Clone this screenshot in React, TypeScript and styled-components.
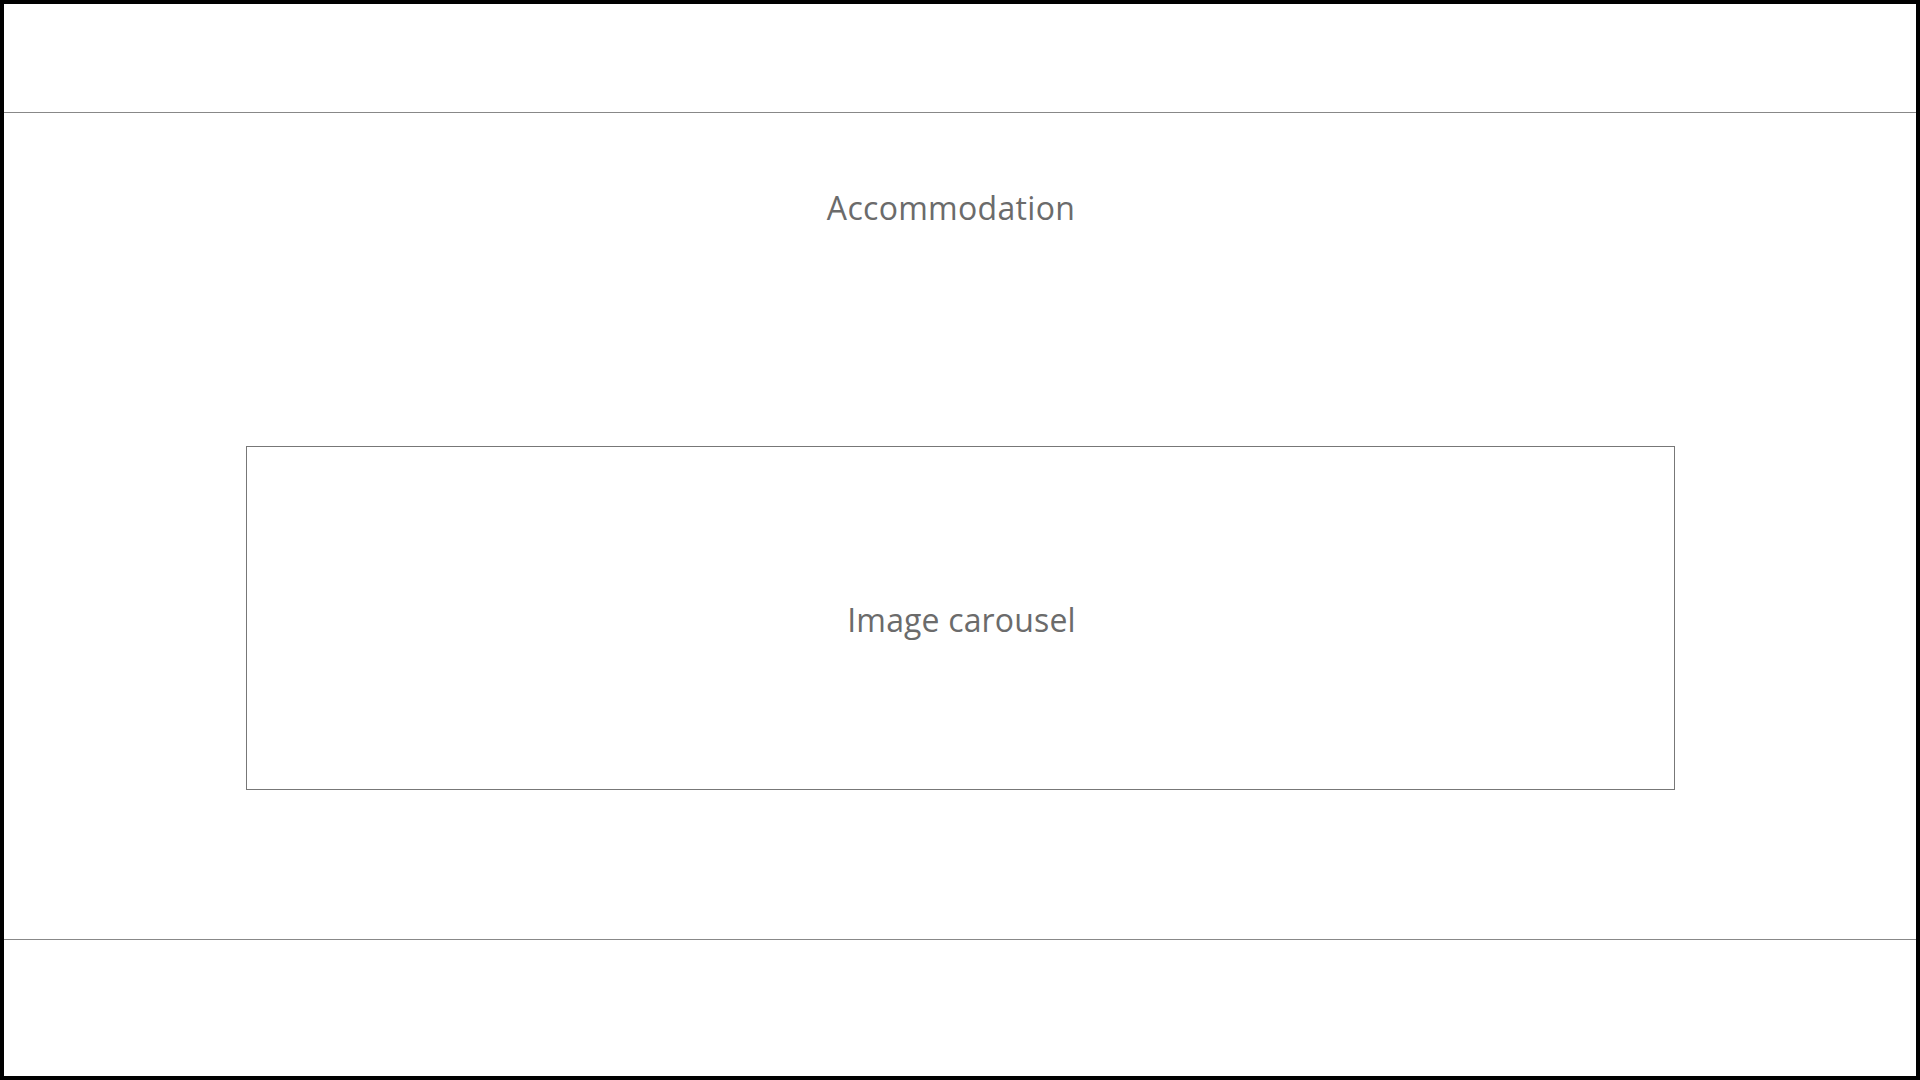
import React from "react";
import styled, { createGlobalStyle } from "styled-components";

const Global = createGlobalStyle`
  html, body { margin: 0; padding: 0; background: #fff; }
  * { box-sizing: border-box; }
`;

const Frame = styled.div`
  width: 1920px;
  height: 1080px;
  border: 4px solid #000;
  display: flex;
  flex-direction: column;
  font-family: "Open Sans", "Noto Sans", sans-serif;
  color: #6b6b6b;
  background: #fff;
`;

const Header = styled.header`
  height: 109px;
  border-bottom: 1px solid #888;
  flex: none;
`;

const Main = styled.main`
  flex: 1;
  display: flex;
  flex-direction: column;
  border-bottom: 1px solid #888;
`;

const Title = styled.h1`
  margin: 74px 0 0;
  padding-right: 18px;
  text-align: center;
  font-size: 32px;
  line-height: 42px;
  font-weight: 400;
  letter-spacing: 0.3px;
`;

const Carousel = styled.section`
  margin: 217px 0 0 242px;
  width: 1429px;
  height: 344px;
  padding-top: 4px;
  padding-left: 2px;
  border: 1px solid #777;
  display: flex;
  align-items: center;
  justify-content: center;
  font-size: 32px;
  line-height: 42px;
  letter-spacing: 0.15px;
`;

const Footer = styled.footer`
  height: 136px;
  flex: none;
`;

export default function App() {
  return (
    <>
      <Global />
      <Frame>
        <Header />
        <Main>
          <Title>Accommodation</Title>
          <Carousel>Image carousel</Carousel>
        </Main>
        <Footer />
      </Frame>
    </>
  );
}
